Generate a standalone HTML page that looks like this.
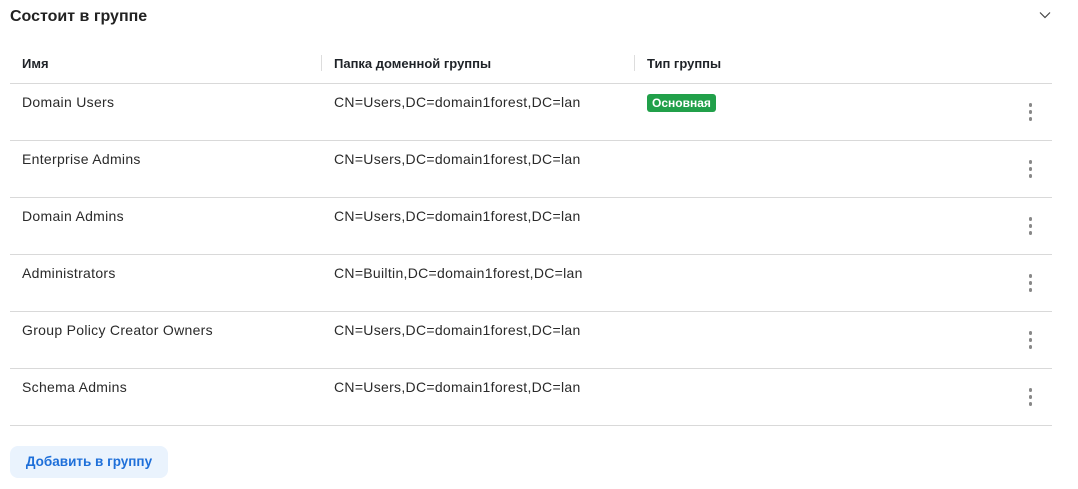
<!DOCTYPE html><html><head><style>
*{margin:0;padding:0;box-sizing:border-box}
body{width:1078px;height:489px;background:#fff;font-family:"Liberation Sans",sans-serif;color:#1f2328;position:relative;overflow:hidden}
.t{position:absolute;left:10px;top:8px;font-size:16px;font-weight:bold;color:#222}
.chev{position:absolute;left:1039px;top:10px}
.hdr{position:absolute;left:10px;top:46px;width:1042px;height:38px;border-bottom:1px solid #d9d9d9;font-size:13px;font-weight:bold}
.hdr span{position:absolute;top:10px}
.sep{position:absolute;top:9px;width:1px;height:16px;background:#ddd}
.row{position:absolute;left:10px;width:1042px;height:57px;border-bottom:1px solid #d9d9d9;font-size:14px;color:#2a2a2a;letter-spacing:0.3px}
.row span{position:absolute;top:10px}
.badge{position:absolute;left:637px;top:10px;background:#21a04a;color:#fff;font-size:12px;font-weight:bold;padding:2px 5px;border-radius:3px;line-height:14px;letter-spacing:0}
.dots{position:absolute;left:1018.5px;top:19px;width:3px}
.dots i{display:block;width:3.5px;height:3.5px;border-radius:50%;background:#888;margin-bottom:3.5px}
.btn{position:absolute;left:10px;top:446px;width:158px;height:32px;background:#eaf3fd;border-radius:8px;color:#1e6fd9;font-size:13.5px;font-weight:bold;text-align:center;line-height:32px}
</style></head><body>
<div class="t">Состоит в группе</div>
<svg class="chev" width="12" height="10" viewBox="0 0 12 10"><path d="M1 2.5l5 5 5-5" fill="none" stroke="#444" stroke-width="1.2"/></svg>
<div class="hdr"><span style="left:12px">Имя</span><div class="sep" style="left:311px"></div><span style="left:324px">Папка доменной группы</span><div class="sep" style="left:624px"></div><span style="left:637px">Тип группы</span></div>
<div class="row" style="top:84px"><span style="left:12px">Domain Users</span><span style="left:324px">CN=Users,DC=domain1forest,DC=lan</span><div class="badge">Основная</div><div class="dots"><i></i><i></i><i></i></div></div>
<div class="row" style="top:141px"><span style="left:12px">Enterprise Admins</span><span style="left:324px">CN=Users,DC=domain1forest,DC=lan</span><div class="dots"><i></i><i></i><i></i></div></div>
<div class="row" style="top:198px"><span style="left:12px">Domain Admins</span><span style="left:324px">CN=Users,DC=domain1forest,DC=lan</span><div class="dots"><i></i><i></i><i></i></div></div>
<div class="row" style="top:255px"><span style="left:12px">Administrators</span><span style="left:324px">CN=Builtin,DC=domain1forest,DC=lan</span><div class="dots"><i></i><i></i><i></i></div></div>
<div class="row" style="top:312px"><span style="left:12px">Group Policy Creator Owners</span><span style="left:324px">CN=Users,DC=domain1forest,DC=lan</span><div class="dots"><i></i><i></i><i></i></div></div>
<div class="row" style="top:369px"><span style="left:12px">Schema Admins</span><span style="left:324px">CN=Users,DC=domain1forest,DC=lan</span><div class="dots"><i></i><i></i><i></i></div></div>
<div class="btn">Добавить в группу</div>
</body></html>
